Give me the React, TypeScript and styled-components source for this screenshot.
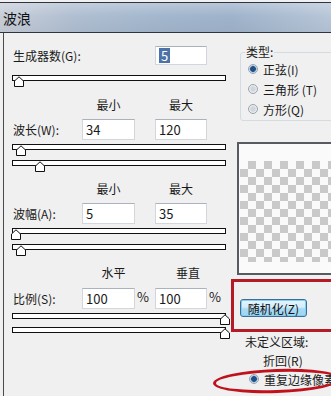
import React from "react";
import styled, {createGlobalStyle} from "styled-components";

const Global = createGlobalStyle`
    html, body {
        margin: 0;
        padding: 0;
        background: #f0f0f0;
    }
    body {
        font-family: "Noto Sans CJK SC", "Liberation Sans", sans-serif;
        font-size: 12px;
        color: #1a1a1a;
    }
`;

const Window = styled.div`
    position: relative;
    width: 331px;
    height: 396px;
    overflow: hidden;
    background: #f0f0f0;
`;
const TitleBar = styled.div`
    height: 29px;
    margin-top: 2px;
    border-top: 1px solid #2e3440;
    border-bottom: 1px solid #2e3440;
    background:
        linear-gradient(180deg, rgba(255,255,255,0.25) 0%, rgba(255,255,255,0) 45%, rgba(0,0,0,0.04) 100%),
        linear-gradient(90deg, #c8ced8 0%, #b0bfd2 22%, #a2b6cd 50%, #9fb3cb 70%, #b7c6d8 100%);
    display: flex;
    align-items: center;
    padding-left: 3px;
    font-size: 14px;
    color: #111;
`;
const Body = styled.div`
    display: flex;
    height: 363px;
`;
const LeftPanel = styled.div`
    width: 228px;
    margin-left: 3px;
    border-left: 1px solid #4a4a4a;
    display: flex;
    flex-direction: column;
`;
const FieldRow = styled.div<{ $top: number; $h: number }>`
    display: grid;
    grid-template-columns: 69px 53px 20px 52px 20px;
    align-items: center;
    height: ${p => p.$h}px;
    margin-top: ${p => p.$top}px;
    padding-left: 9px;
`;
const Label = styled.span`
    white-space: nowrap;
`;
const Head = styled.span<{ $shift?: number }>`
    text-align: center;
    padding-left: ${p => (p.$shift || 0) * 2}px;
`;
const Input = styled.div`
    height: 100%;
    box-sizing: border-box;
    background: #fff;
    border: 1px solid #d2d7de;
    border-top-color: #aab2bd;
    display: flex;
    align-items: center;
    padding-left: 3px;
    font-size: 13px;
`;
const Selected = styled.span`
    background: #4b73a8;
    color: #fff;
    padding: 0 2px;
    line-height: 15px;
`;
const Pct = styled.span`
    padding-left: 2px;
    font-size: 13px;
    align-self: start;
    margin-top: -1px;
`;
const Track = styled.div<{ $top: number }>`
    position: relative;
    margin-top: ${p => p.$top}px;
    margin-left: 8px;
    width: 214px;
    height: 6px;
    box-sizing: border-box;
    border: 1px solid #111;
    background: #fff;
`;
const Thumb = styled.svg`
    position: absolute;
    top: 0;
    width: 10px;
    height: 11px;
`;

function Slider({top, pos}: { top: number; pos: number }) {
    return (
        <Track $top={top}>
            <Thumb viewBox="0 0 10 11" style={{left: pos - 5}}>
                <polygon points="0.5,5 5,0.8 9.5,5 9.5,10.5 0.5,10.5" fill="#fff" stroke="#111" strokeWidth="1"/>
            </Thumb>
        </Track>
    );
}

const RightPanel = styled.div`
    flex: 1;
    display: flex;
    flex-direction: column;
`;
const TypeGroup = styled.fieldset`
    margin: 12px -10px 0 13px;
    padding: 0 0 1px 7px;
    border: 1px solid #d3dce3;
    border-radius: 3px;
`;
const Legend = styled.legend`
    padding: 0 1px;
    margin-left: -3px;
    line-height: 14px;
`;
const RadioRow = styled.div<{ $indent?: number }>`
    display: flex;
    align-items: center;
    height: 20px;
    gap: 5px;
    padding-left: ${p => p.$indent || 0}px;
    white-space: nowrap;
`;
const Radio = styled.span<{ $on?: boolean }>`
    width: 10px;
    height: 10px;
    border-radius: 50%;
    box-sizing: border-box;
    border: 1px solid #9aa4ad;
    background: ${p => p.$on
        ? "radial-gradient(circle, #1f4f86 0 2.5px, #7fa3c6 3px, #e8eef4 4px)"
        : "radial-gradient(circle, #d0d6dc 0 2px, #eef1f4 4px)"};
    flex: none;
`;
const Preview = styled.div`
    margin: 21px -10px 0 10px;
    height: 133px;
    box-sizing: border-box;
    border: 2px solid #585c60;
    border-right: none;
    background: #fafafa;
    padding-top: 17px;
`;
const Checker = styled.div`
    height: 101px;
    margin-left: 1px;
    background-color: #fafafa;
    background-image:
        linear-gradient(45deg, #c9c9c9 25%, transparent 25%, transparent 75%, #c9c9c9 75%),
        linear-gradient(45deg, #c9c9c9 25%, transparent 25%, transparent 75%, #c9c9c9 75%);
    background-size: 16px 16px;
    background-position: 0 0, 8px 8px;
`;
const RedBox = styled.div`
    margin: 4px -10px 0 4px;
    height: 53px;
    box-sizing: border-box;
    border: 3px solid #b51b27;
    padding: 17px 0 0 6px;
`;
const Button = styled.div`
    width: 67px;
    height: 18px;
    box-sizing: border-box;
    border: 1px solid #3c6f98;
    border-radius: 3px;
    background: linear-gradient(180deg, #e8f5fc 0%, #d3ecfa 45%, #a9daf3 55%, #9fd4f1 100%);
    box-shadow: inset 0 0 0 1px #7fd0f4;
    display: flex;
    align-items: center;
    justify-content: center;
    font-size: 12px;
    color: #111;
`;
const Caption = styled.div<{ $top: number; $indent: number }>`
    margin-top: ${p => p.$top}px;
    padding-left: ${p => p.$indent}px;
    line-height: 14px;
    white-space: nowrap;
`;
const Ellipse = styled.div`
    position: absolute;
    left: 213px;
    top: 369px;
    width: 128px;
    height: 24px;
    box-sizing: border-box;
    border: 3px solid #c0121c;
    border-radius: 50%;
    transform: rotate(-2deg);
`;

export default function App() {
    return (
        <Window>
            <Global/>
            <TitleBar>波浪</TitleBar>
            <Body>
                <LeftPanel>
                    <FieldRow $top={13} $h={19}>
                        <Label>生成器数(G):</Label>
                        <span/>
                        <span/>
                        <Input><Selected>5</Selected></Input>
                    </FieldRow>
                    <Slider top={10} pos={6}/>

                    <FieldRow $top={15} $h={14}>
                        <span/>
                        <Head>最小</Head>
                        <span/>
                        <Head>最大</Head>
                    </FieldRow>
                    <FieldRow $top={9} $h={20}>
                        <Label>波长(W):</Label>
                        <Input>34</Input>
                        <span/>
                        <Input>120</Input>
                    </FieldRow>
                    <Slider top={5} pos={8}/>
                    <Slider top={10} pos={27}/>

                    <FieldRow $top={14} $h={14}>
                        <span/>
                        <Head>最小</Head>
                        <span/>
                        <Head>最大</Head>
                    </FieldRow>
                    <FieldRow $top={9} $h={19}>
                        <Label>波幅(A):</Label>
                        <Input>5</Input>
                        <span/>
                        <Input>35</Input>
                    </FieldRow>
                    <Slider top={6} pos={3}/>
                    <Slider top={10} pos={8}/>

                    <FieldRow $top={14} $h={14}>
                        <span/>
                        <Head $shift={5}>水平</Head>
                        <span/>
                        <Head $shift={7}>垂直</Head>
                    </FieldRow>
                    <FieldRow $top={10} $h={19}>
                        <Label>比例(S):</Label>
                        <Input>100</Input>
                        <Pct>%</Pct>
                        <Input>100</Input>
                        <Pct>%</Pct>
                    </FieldRow>
                    <Slider top={6} pos={212}/>
                    <Slider top={8} pos={212}/>
                </LeftPanel>

                <RightPanel>
                    <TypeGroup>
                        <Legend>类型:</Legend>
                        <RadioRow><Radio $on/>正弦(I)</RadioRow>
                        <RadioRow><Radio/>三角形 (T)</RadioRow>
                        <RadioRow><Radio/>方形(Q)</RadioRow>
                    </TypeGroup>
                    <Preview>
                        <Checker/>
                    </Preview>
                    <RedBox>
                        <Button>随机化(Z)</Button>
                    </RedBox>
                    <Caption $top={3} $indent={18}>未定义区域:</Caption>
                    <Caption $top={5} $indent={36}>折回(R)</Caption>
                    <RadioRow $indent={22} style={{marginTop: 1}}>
                        <Radio $on/>重复边缘像素(E)
                    </RadioRow>
                </RightPanel>
            </Body>
            <Ellipse/>
        </Window>
    );
}
